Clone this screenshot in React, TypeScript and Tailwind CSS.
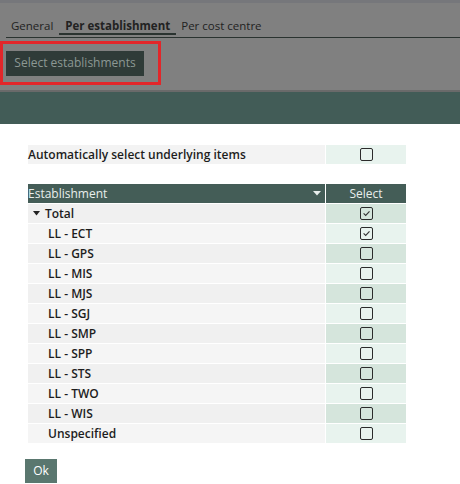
import React from "react";

const rows = [
  { label: "Total", checked: true, top: true },
  { label: "LL - ECT", checked: true },
  { label: "LL - GPS", checked: false },
  { label: "LL - MIS", checked: false },
  { label: "LL - MJS", checked: false },
  { label: "LL - SGJ", checked: false },
  { label: "LL - SMP", checked: false },
  { label: "LL - SPP", checked: false },
  { label: "LL - STS", checked: false },
  { label: "LL - TWO", checked: false },
  { label: "LL - WIS", checked: false },
  { label: "Unspecified", checked: false },
];

function Box({ checked }: { checked: boolean }) {
  return (
    <div className="w-[13px] h-[13px] border border-[#2b2b2b] rounded-[2px] flex items-center justify-center">
      {checked && (
        <svg width="9" height="9" viewBox="0 0 9 9">
          <path d="M1.6 4.4 L3.7 6.4 L7.5 2.4" fill="none" stroke="#333" strokeWidth="1.1" />
        </svg>
      )}
    </div>
  );
}

export default function App() {
  return (
    <div
      className="w-[460px] h-[484px] overflow-hidden bg-white text-[12px] text-[#1d1d1d]"
      style={{ fontFamily: '"Open Sans", "DejaVu Sans", sans-serif' }}
    >
      <div className="bg-[#808080] h-[90px] flex flex-col">
        <div className="h-[3px] bg-[#76777b]" />
        <div className="flex items-end h-[35px] ml-[6px] border-b border-[#2a3330] text-[#222] text-[11.5px] leading-[14px]">
          <div className="px-[5px] pb-[4px]">General</div>
          <div className="flex flex-col mx-[1px] pb-[2px]">
            <div className="px-[6px] font-bold">Per establishment</div>
            <div className="h-[2px] bg-[#2a3330]" />
          </div>
          <div className="px-[4px] pb-[4px]">Per cost centre</div>
        </div>
        <div className="mt-[3px] w-[161px] h-[44px] border-[3px] border-[#e2262a] flex items-center pl-[3px]">
          <div className="h-[25px] w-[138px] bg-[#2f3b38] text-[#8c9894] text-[12px] flex items-center justify-center">
            Select establishments
          </div>
        </div>
      </div>
      <div className="h-[2px] bg-[#6a6a6a]" />
      <div className="h-[32px] bg-[#425c57]" />

      <div className="ml-[28px] w-[378px] mt-[21px]">
        <div className="flex h-[19px]">
          <div className="w-[297px] bg-[#f3f3f3] font-semibold flex items-center">
            Automatically select underlying items
          </div>
          <div className="w-[1px]" />
          <div className="flex-1 bg-[#e8f3ee] flex items-center justify-center">
            <Box checked={false} />
          </div>
        </div>

        <div className="mt-[20px] flex h-[19px] bg-[#445d57] text-[#e8eeec]">
          <div className="w-[297px] flex items-center justify-between pr-[3px]">
            <span>Establishment</span>
            <svg width="8" height="5" viewBox="0 0 8 5" className="mr-[1px]">
              <path d="M0 0 L8 0 L4 4.5 Z" fill="#e8eeec" />
            </svg>
          </div>
          <div className="w-[1px] bg-white" />
          <div className="flex-1 flex items-center justify-center">Select</div>
        </div>

        {rows.map((r, i) => (
          <div key={r.label} className="flex h-[20px] border-t border-white">
            <div
              className={`w-[297px] flex items-center font-semibold ${
                i % 2 === 0 ? "bg-[#f0f0f0]" : "bg-[#f5f5f5]"
              }`}
            >
              {r.top ? (
                <span className="flex items-center pl-[5px]">
                  <svg width="7" height="5" viewBox="0 0 7 5" className="mr-[5px]">
                    <path d="M0 0 L7 0 L3.5 4.5 Z" fill="#222" />
                  </svg>
                  {r.label}
                </span>
              ) : (
                <span className="pl-[20px]">{r.label}</span>
              )}
            </div>
            <div className="w-[1px] bg-white" />
            <div
              className={`flex-1 flex items-center justify-center ${
                i % 2 === 0 ? "bg-[#d5e5dc]" : "bg-[#e8f3ee]"
              }`}
            >
              <Box checked={r.checked} />
            </div>
          </div>
        ))}
      </div>

      <div className="ml-[25px] mt-[16px] w-[32px] h-[24px] bg-[#5a776f] text-white flex items-center justify-center">
        Ok
      </div>
    </div>
  );
}
